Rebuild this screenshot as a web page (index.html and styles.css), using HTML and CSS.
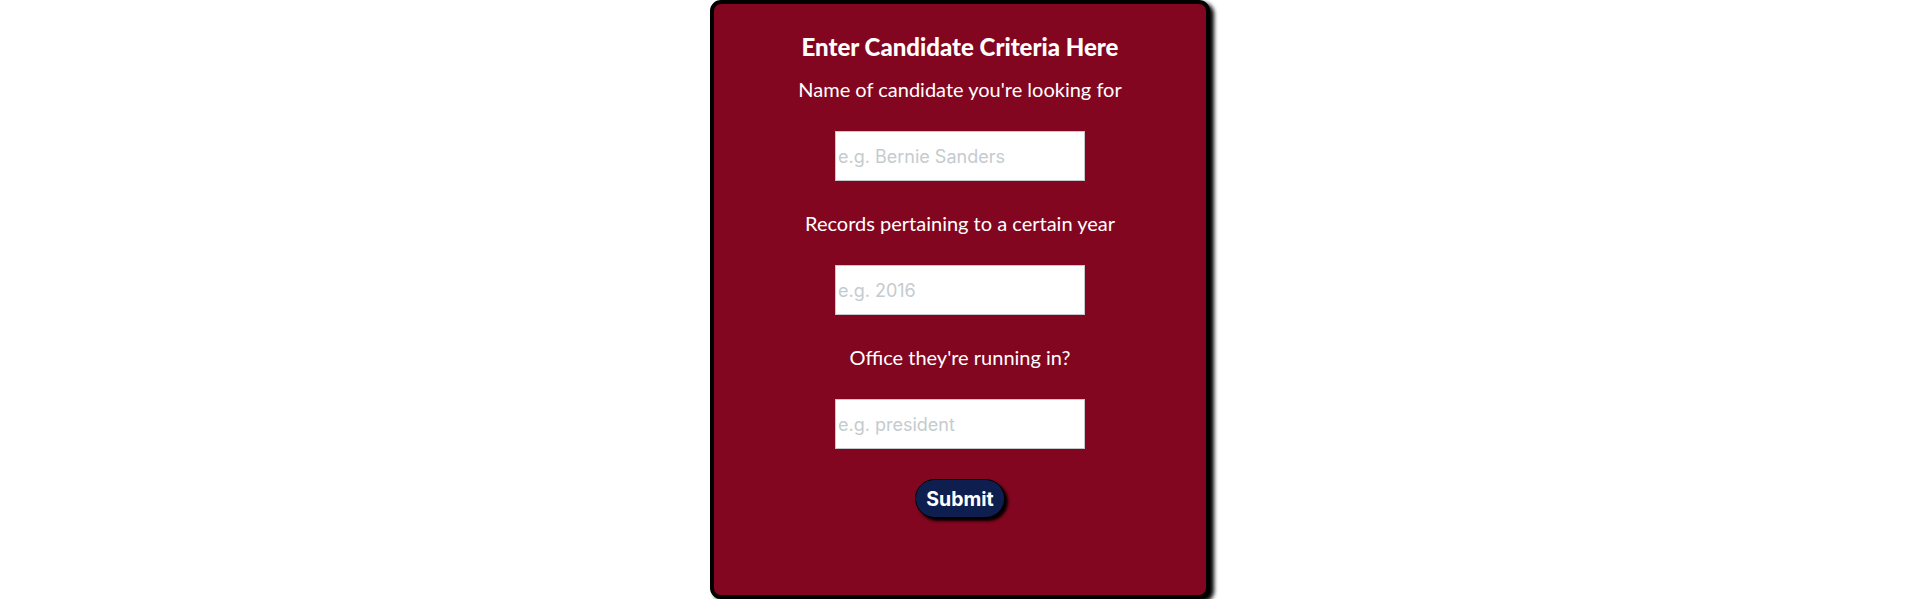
FILE: index.html
```html
<!DOCTYPE html>
<html lang="en">
<head>
<meta charset="utf-8">
<title>Candidate Search</title>
<link rel="stylesheet" href="styles.css">
</head>
<body>
<div class="card">
  <h3 class="title">Enter Candidate Criteria Here</h3>
  <form class="form">
    <label class="label" for="name">Name of candidate you're looking for</label>
    <input class="field" id="name" type="text" placeholder="e.g. Bernie Sanders">
    <label class="label" for="year">Records pertaining to a certain year</label>
    <input class="field" id="year" type="text" placeholder="e.g. 2016">
    <label class="label" for="office">Office they're running in?</label>
    <input class="field" id="office" type="text" placeholder="e.g. president">
    <button class="submit" type="button">Submit</button>
  </form>
</div>
</body>
</html>
```

FILE: styles.css
```css
html, body {
  margin: 0;
  padding: 0;
  background: #ffffff;
}

.card {
  box-sizing: border-box;
  width: 500px;
  height: 599px;
  margin: 0 auto;
  padding-top: 29px;
  background: #830620;
  border: 4px solid #000000;
  border-radius: 11px;
  box-shadow: 4px 3px 4px #000000;
  display: flex;
  flex-direction: column;
  align-items: center;
  color: #ffffff;
  font-family: Lato, "Liberation Sans", sans-serif;
}

.title {
  margin: 0 0 16px 0;
  font-size: 24px;
  line-height: 28px;
  font-weight: 900;
}

.form {
  display: flex;
  flex-direction: column;
  align-items: center;
  gap: 30px;
}

.label {
  font-size: 20px;
  line-height: 24px;
}

.field {
  box-sizing: border-box;
  width: 250px;
  height: 50px;
  margin: 0;
  padding: 1px 2px;
  border: 1px solid #c4c8ca;
  background: #ffffff;
  font-family: Inter, "Liberation Sans", sans-serif;
  font-size: 18px;
  color: #222222;
  outline: none;
}

.field::placeholder {
  color: #c5cbce;
}

.submit {
  box-sizing: border-box;
  width: 90px;
  height: 39px;
  padding: 0;
  background: #0e1f4f;
  color: #ffffff;
  border: 1px solid #000000;
  border-radius: 20px;
  box-shadow: 3px 3px 3px #000000;
  font-family: Inter, "Liberation Sans", sans-serif;
  font-size: 19.5px;
  font-weight: 700;
}
```
